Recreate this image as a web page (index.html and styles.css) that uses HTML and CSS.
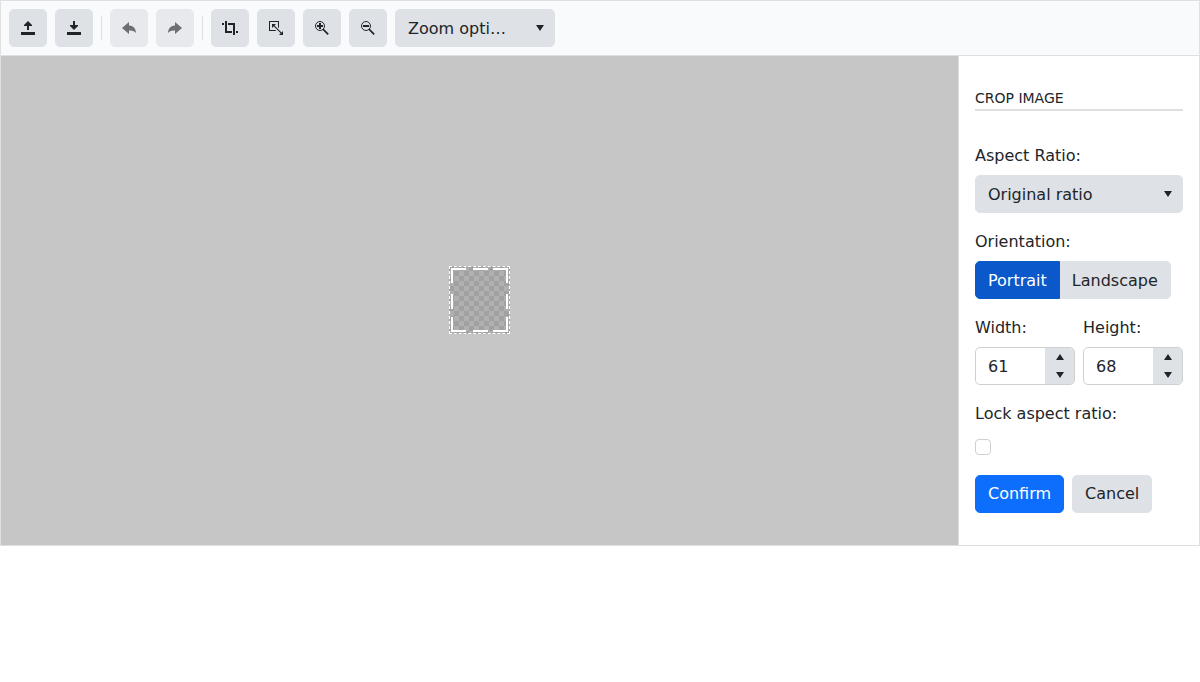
FILE: index.html
```html
<!DOCTYPE html>
<html lang="en">
<head>
<meta charset="utf-8">
<title>Image Editor</title>
<link rel="stylesheet" href="styles.css">
</head>
<body>
<div class="editor">
  <div class="toolbar">
    <button class="btn icon-btn" aria-label="Open"><svg class="icon" viewBox="0 0 16 16"><path d="M8 1l4 4v1H9v4H7V6H4V5zM1 12h14v3H1z"/></svg></button>
    <button class="btn icon-btn" aria-label="Save"><svg class="icon" viewBox="0 0 16 16"><path d="M7 1h2v4h3v1l-4 4-4-4V5h3zM1 12h14v3H1z"/></svg></button>
    <span class="separator"></span>
    <button class="btn icon-btn disabled" aria-label="Undo"><svg class="icon" viewBox="0 0 16 16"><path d="M1 8l7-6v3.500c4 0 7 3 7 7.500-1.500-2-4-2.500-7-2.500V14z"/></svg></button>
    <button class="btn icon-btn disabled" aria-label="Redo"><svg class="icon" viewBox="0 0 16 16"><path d="M15 8L8 2v3.500c-4 0-7 3-7 7.500 1.500-2 4-2.500 7-2.500V14z"/></svg></button>
    <span class="separator"></span>
    <button class="btn icon-btn" aria-label="Crop"><svg class="icon" viewBox="0 0 16 16"><path d="M0 3h2v2H0zM3 1h2v10h5v2H3zM6 3h7v12h-2V5H6zM14 11h2v2h-2z"/></svg></button>
    <button class="btn icon-btn" aria-label="Resize"><svg class="icon" viewBox="0 0 16 16"><path d="M1 1h10v7.300l-1-1V2H2v8h5.300l1 1H1z"/><path d="M4 4h4L6.500 5.500l7 7L15 11v4h-4l1.700-1.700-7-7L4 8z"/></svg></button>
    <button class="btn icon-btn" aria-label="Zoom in"><svg class="icon" viewBox="0 0 16 16"><circle class="lens" cx="6" cy="6" r="4.500"/><path d="M5 3h2v2h2v2H7v2H5V7H3V5h2zM9.500 8.500l5.300 5.300-1.200 1.200-5.200-5.300z"/></svg></button>
    <button class="btn icon-btn" aria-label="Zoom out"><svg class="icon" viewBox="0 0 16 16"><circle class="lens" cx="6" cy="6" r="4.500"/><path d="M3 5h6v2H3zM9.500 8.500l5.300 5.300-1.200 1.200-5.200-5.300z"/></svg></button>
    <button class="btn select zoom-select"><span class="select-text">Zoom opti…</span><svg class="icon" viewBox="0 0 16 16"><path d="M4 5h8l-4 6z"/></svg></button>
  </div>
  <div class="content">
    <div class="canvas-area">
      <div class="cropper">
        <i class="handle tl"></i><i class="handle t"></i><i class="handle tr"></i>
        <i class="handle l"></i><i class="handle r"></i>
        <i class="handle bl"></i><i class="handle b"></i><i class="handle br"></i>
      </div>
    </div>
    <div class="pane">
      <div class="legend">CROP IMAGE</div>
      <div class="label first">Aspect Ratio:</div>
      <button class="btn select"><span class="select-text">Original ratio</span><svg class="icon" viewBox="0 0 16 16"><path d="M4 5h8l-4 6z"/></svg></button>
      <div class="label">Orientation:</div>
      <div class="group"><button class="btn selected">Portrait</button><button class="btn">Landscape</button></div>
      <div class="sizes">
        <div class="size">
          <div class="label">Width:</div>
          <div class="numeric"><span class="value">61</span><span class="spinner"><svg class="icon" viewBox="0 0 16 16"><path d="M4 11h8L8 5z"/></svg><svg class="icon" viewBox="0 0 16 16"><path d="M4 5h8l-4 6z"/></svg></span></div>
        </div>
        <div class="size">
          <div class="label">Height:</div>
          <div class="numeric"><span class="value">68</span><span class="spinner"><svg class="icon" viewBox="0 0 16 16"><path d="M4 11h8L8 5z"/></svg><svg class="icon" viewBox="0 0 16 16"><path d="M4 5h8l-4 6z"/></svg></span></div>
        </div>
      </div>
      <div class="label">Lock aspect ratio:</div>
      <span class="checkbox"></span>
      <div class="actions"><button class="btn primary">Confirm</button><button class="btn">Cancel</button></div>
    </div>
  </div>
</div>
</body>
</html>
```
FILE: styles.css
```css
* { box-sizing: border-box; }
body {
  margin: 0;
  background: #fff;
  color: #212529;
  font: 16px/24px "DejaVu Sans", sans-serif;
}
.editor {
  width: 1200px;
  height: 546px;
  border: 1px solid #dfdfdf;
  display: flex;
  flex-direction: column;
}
.toolbar {
  display: flex;
  align-items: center;
  gap: 8px;
  height: 55px;
  padding: 8px;
  background: #f8fafc;
  border-bottom: 1px solid #dfdfdf;
}
.btn {
  display: inline-flex;
  align-items: center;
  justify-content: center;
  height: 38px;
  margin: 0;
  padding: 6px 12px;
  border: 1px solid #dee1e6;
  border-radius: 5px;
  background: #dee1e6;
  color: #212529;
  font: inherit;
  white-space: nowrap;
}
.icon-btn { width: 38px; padding: 0; }
.disabled { opacity: .65; }
.icon {
  display: block;
  flex: none;
  width: 16px;
  height: 16px;
  fill: currentColor;
}
.lens { fill: none; stroke: currentColor; }
.separator { width: 1px; height: 24px; background: #dfdfdf; }
.select { justify-content: space-between; width: 100%; padding-right: 6px; }
.select-text { padding-top: 2px; }
.zoom-select { width: 160px; }
.content { display: flex; flex: 1; }
.canvas-area {
  flex: 1;
  display: flex;
  align-items: center;
  justify-content: center;
  padding-bottom: 2px;
  background: #c6c6c6;
}
.cropper {
  position: relative;
  width: 61px;
  height: 68px;
  border: 1px dashed #fff;
  background: repeating-conic-gradient(#b0b0b0 0 25%, #a1a1a1 0 50%) 0 0 / 10px 10px border-box border-box;
}
.handle { position: absolute; width: 15px; height: 15px; border: 0 solid #fff; }
.tl, .t, .tr { top: 1px; border-top-width: 2px; }
.bl, .b, .br { bottom: 1px; border-bottom-width: 2px; }
.tl, .l, .bl { left: 1px; border-left-width: 2px; }
.tr, .r, .br { right: 1px; border-right-width: 2px; }
.t, .b { left: 23px; }
.l, .r { top: 27px; }
.pane {
  width: 241px;
  padding: 32px 16px;
  border-left: 1px solid #dfdfdf;
  background: #fff;
}
.legend {
  height: 23px;
  border-bottom: 2px solid #dfdfdf;
  font-size: 14px;
  line-height: 21px;
}
.label { margin: 17px 0 7px; height: 24px; }
.label.first { margin-top: 33px; }
.group { display: flex; }
.group .btn { padding: 8px 12px 6px; }
.group .btn:first-child { border-radius: 5px 0 0 5px; }
.group .btn:last-child { border-radius: 0 5px 5px 0; margin-left: -1px; }
.group .btn.selected { position: relative; z-index: 1; background: #0a58ca; border-color: #0a58ca; color: #fff; }
.sizes { display: flex; gap: 8px; }
.size { flex: 1; }
.numeric {
  display: flex;
  height: 38px;
  border: 1px solid #d0d0d0;
  border-radius: 5px;
  overflow: hidden;
}
.value { flex: 1; padding: 7px 12px 5px; }
.spinner {
  display: flex;
  flex-direction: column;
  align-items: center;
  justify-content: space-around;
  width: 29px;
  background: #dee1e6;
}
.checkbox {
  display: block;
  width: 16px;
  height: 16px;
  margin-top: 13px;
  border: 1px solid #d0d0d0;
  border-radius: 4px;
}
.actions { display: flex; gap: 8px; margin-top: 20px; }
.primary { background: #0d6efd; border-color: #0d6efd; color: #fff; }
```
